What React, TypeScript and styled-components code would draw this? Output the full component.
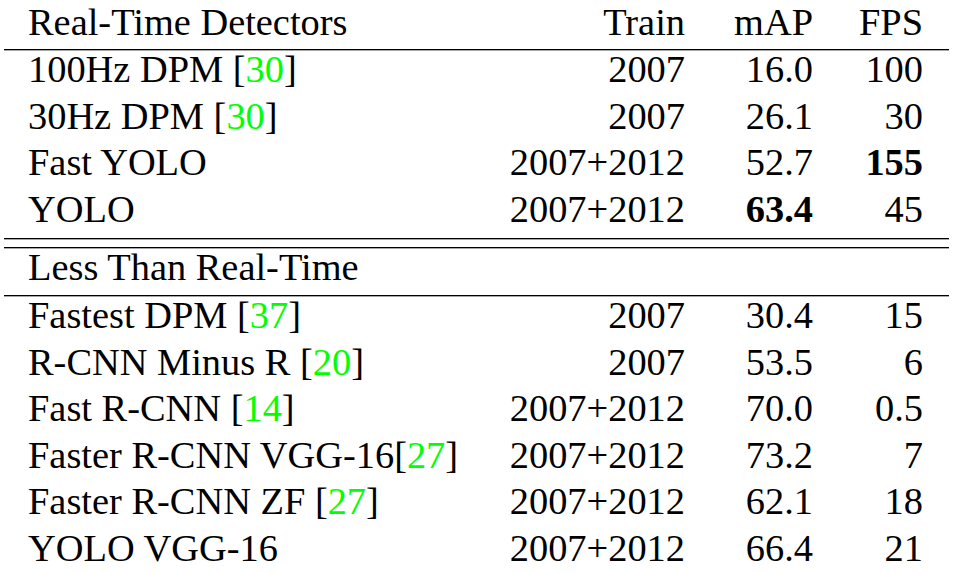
import React from "react";
import styled, { createGlobalStyle } from "styled-components";

const GlobalStyle = createGlobalStyle`
  html, body {
    margin: 0;
    padding: 0;
    background: #ffffff;
  }
  body {
    font-family: "Liberation Serif", "Times New Roman", Times, serif;
    color: #000000;
  }
`;

const Table = styled.div`
  width: 945px;
  margin-left: 4px;
  font-family: "Liberation Serif", "Times New Roman", Times, serif;
  font-size: 38.4px;
  line-height: 39px;
`;

const Row = styled.div`
  display: grid;
  grid-template-columns: 1fr 200px 128px 110px;
  padding: 0 26px 0 24px;
  height: 39px;
  white-space: nowrap;
`;

const HeaderRow = styled(Row)`
  margin-top: 2.5px;
`;

const Cell = styled.div<{ $bold?: boolean }>`
  text-align: right;
  font-weight: ${(p) => (p.$bold ? 700 : 400)};
`;

const NameCell = styled.div`
  text-align: left;
`;

const Rule = styled.div<{ $top: number }>`
  height: 1px;
  background: #000000;
  box-shadow: 0 1px 0 rgba(0, 0, 0, 0.35);
  margin-top: ${(p) => p.$top}px;
`;

const Body = styled.div`
  display: flex;
  flex-direction: column;
  gap: 7.5px;
`;

const Cite = styled.span`
  color: #00ff00;
`;

type Entry = {
  name: string;
  cite?: string;
  space?: boolean;
  train: string;
  map: string;
  fps: string;
  boldMap?: boolean;
  boldFps?: boolean;
};

const realTime: Entry[] = [
  { name: "100Hz DPM", cite: "30", space: true, train: "2007", map: "16.0", fps: "100" },
  { name: "30Hz DPM", cite: "30", space: true, train: "2007", map: "26.1", fps: "30" },
  { name: "Fast YOLO", train: "2007+2012", map: "52.7", fps: "155", boldFps: true },
  { name: "YOLO", train: "2007+2012", map: "63.4", fps: "45", boldMap: true },
];

const lessThan: Entry[] = [
  { name: "Fastest DPM", cite: "37", space: true, train: "2007", map: "30.4", fps: "15" },
  { name: "R-CNN Minus R", cite: "20", space: true, train: "2007", map: "53.5", fps: "6" },
  { name: "Fast R-CNN", cite: "14", space: true, train: "2007+2012", map: "70.0", fps: "0.5" },
  { name: "Faster R-CNN VGG-16", cite: "27", space: false, train: "2007+2012", map: "73.2", fps: "7" },
  { name: "Faster R-CNN ZF", cite: "27", space: true, train: "2007+2012", map: "62.1", fps: "18" },
  { name: "YOLO VGG-16", train: "2007+2012", map: "66.4", fps: "21" },
];

const DataRow: React.FC<{ e: Entry }> = ({ e }) => (
  <Row>
    <NameCell>
      {e.name}
      {e.cite && (
        <>
          {e.space ? " " : ""}[<Cite>{e.cite}</Cite>]
        </>
      )}
    </NameCell>
    <Cell>{e.train}</Cell>
    <Cell $bold={e.boldMap}>{e.map}</Cell>
    <Cell $bold={e.boldFps}>{e.fps}</Cell>
  </Row>
);

export default function App() {
  return (
    <>
      <GlobalStyle />
      <Table>
        <HeaderRow>
          <NameCell>Real-Time Detectors</NameCell>
          <Cell>Train</Cell>
          <Cell>mAP</Cell>
          <Cell>FPS</Cell>
        </HeaderRow>
        <Rule $top={7.5} />
        <Body>
          {realTime.map((e) => (
            <DataRow key={e.name} e={e} />
          ))}
        </Body>
        <Rule $top={9.5} />
        <Rule $top={8} />
        <Row>
          <NameCell>Less Than Real-Time</NameCell>
          <Cell />
          <Cell />
          <Cell />
        </Row>
        <Rule $top={8} />
        <Body>
          {lessThan.map((e) => (
            <DataRow key={e.name} e={e} />
          ))}
        </Body>
      </Table>
    </>
  );
}
